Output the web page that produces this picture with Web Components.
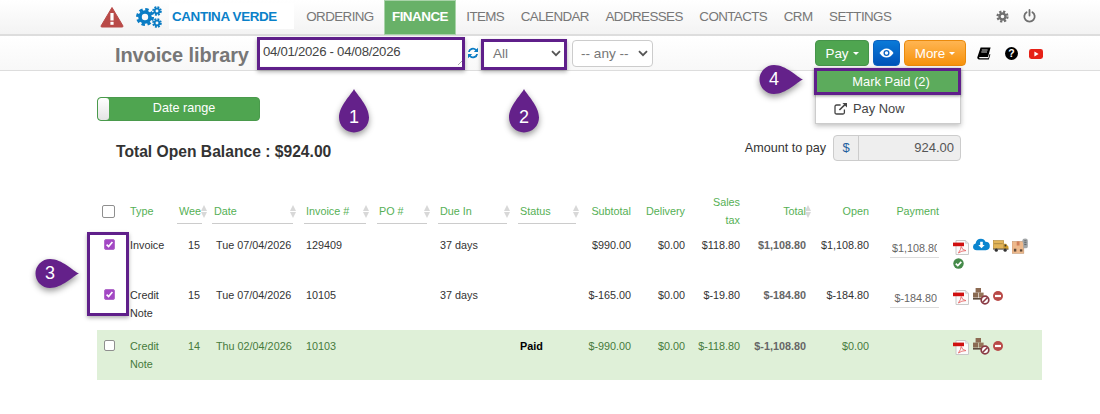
<!DOCTYPE html>
<html>
<head>
<meta charset="utf-8">
<style>
  html, body { margin: 0; padding: 0; background: #fff; font-family: "Liberation Sans", Arial, sans-serif; color: #333; overflow: hidden; }
  app-page { width: 1100px; height: 414px; }
</style>
</head>
<body>
<app-page>
  <top-nav slot="nav">
    <nav-link>ORDERING</nav-link>
    <nav-link active>FINANCE</nav-link>
    <nav-link>ITEMS</nav-link>
    <nav-link>CALENDAR</nav-link>
    <nav-link>ADDRESSES</nav-link>
    <nav-link>CONTACTS</nav-link>
    <nav-link>CRM</nav-link>
    <nav-link>SETTINGS</nav-link>
  </top-nav>
  <tool-bar slot="bar"></tool-bar>
  <balance-panel></balance-panel>
  <invoice-table>
    <invoice-row cells='["Invoice","15","Tue 07/04/2026","129409","","37 days","","$990.00","$0.00","$118.80","$1,108.80","$1,108.80"]' pay="$1,108.80" checked icons="pdf cloud truck box check"></invoice-row>
    <invoice-row tall cells='["Credit Note","15","Tue 07/04/2026","10105","","37 days","","$-165.00","$0.00","$-19.80","$-184.80","$-184.80"]' pay="$-184.80" checked icons="pdf pallet minus"></invoice-row>
    <invoice-row paid cells='["Credit Note","14","Thu 02/04/2026","10103","","","Paid","$-990.00","$0.00","$-118.80","$-1,108.80","$0.00"]' icons="pdf pallet minus"></invoice-row>
  </invoice-table>

  <mark-box style="left:257px;top:37px;width:208px;height:33px"></mark-box>
  <mark-box style="left:481px;top:39px;width:86px;height:31px"></mark-box>
  <mark-box style="left:87px;top:232px;width:42px;height:84px"></mark-box>
  <pin-note n="1" dir="up" style="left:339px;top:89px"></pin-note>
  <pin-note n="2" dir="up" style="left:509px;top:89px"></pin-note>
  <pin-note n="3" dir="right" style="left:35px;top:259px"></pin-note>
  <pin-note n="4" dir="right" style="left:759px;top:65px"></pin-note>
</app-page>

<script>
const icons = {
  warning: `<svg width="24" height="22" viewBox="0 0 24 22"><path d="M12 1.5 L23 20 Q23.3 21 22 21 H2 Q.7 21 1 20 Z" fill="#b94a48" stroke="#b94a48" stroke-linejoin="round"/><rect x="10.4" y="7" width="3.2" height="7.5" fill="#fff"/><rect x="10.4" y="15.8" width="3.2" height="3" fill="#fff"/></svg>`,
  gears: `<svg width="26" height="22" viewBox="0 0 26 22" fill="none" stroke="#0a7cc4">
    <circle cx="9" cy="11" r="5" stroke-width="3.6"/><circle cx="9" cy="11" r="7.6" stroke-width="2.8" stroke-dasharray="3.4 2.57"/>
    <circle cx="21" cy="5" r="2.4" stroke-width="1.9"/><circle cx="21" cy="5" r="3.9" stroke-width="1.8" stroke-dasharray="1.9 1.16"/>
    <circle cx="21" cy="17" r="2.4" stroke-width="1.9"/><circle cx="21" cy="17" r="3.9" stroke-width="1.8" stroke-dasharray="1.9 1.16"/></svg>`,
  cog: `<svg width="13" height="13" viewBox="0 0 13 13" fill="none" stroke="#6f6f6f"><circle cx="6.5" cy="6.5" r="3" stroke-width="2.4"/><circle cx="6.5" cy="6.5" r="5" stroke-width="2.2" stroke-dasharray="2.2 1.73"/></svg>`,
  power: `<svg width="13" height="14" viewBox="0 0 13 14" fill="none" stroke="#6f6f6f" stroke-width="1.8" stroke-linecap="round"><path d="M3.6 3.2 A5.2 5.2 0 1 0 9.4 3.2"/><path d="M6.5 1 V6.5"/></svg>`,
  refresh: `<svg width="12" height="12" viewBox="0 0 12 12" fill="#0a7cc4"><path d="M1 5 A5 5 0 0 1 9.5 2.2 L11 .8 V5 H6.8 L8.3 3.5 A3.3 3.3 0 0 0 2.8 5 Z"/><path d="M11 7 A5 5 0 0 1 2.5 9.8 L1 11.2 V7 H5.2 L3.7 8.5 A3.3 3.3 0 0 0 9.2 7 Z"/></svg>`,
  chevron: `<svg width="10" height="7" viewBox="0 0 10 7" fill="none" stroke="#555" stroke-width="1.8"><path d="M1 1.2 L5 5.2 L9 1.2"/></svg>`,
  eye: `<svg width="15" height="10" viewBox="0 0 15 10"><path d="M.5 5 Q3.5 .4 7.5 .4 T14.5 5 Q11.5 9.6 7.5 9.6 T.5 5Z" fill="#fff"/><circle cx="7.5" cy="5" r="3" fill="#0a63c4"/><circle cx="7.5" cy="5" r="1.7" fill="#fff"/></svg>`,
  book: `<svg width="14" height="13" viewBox="0 0 14 13"><path d="M3.6 .4 H13.6 L11 10 H2.6 Q1.6 10.6 2.6 11.2 H11.4 L12.6 7 L13.4 7.4 L11.8 12.6 H1.8 Q-.2 12 .4 10 Z" fill="#000"/><path d="M4.800 3 H10.600 M4.300 5 H10" stroke="#fff" stroke-width=".8"/></svg>`,
  youtube: `<svg width="14" height="10" viewBox="0 0 14 10"><rect width="14" height="10" rx="2.4" fill="#e62117"/><path d="M5.4 2.6 L9.6 5 L5.4 7.4Z" fill="#fff"/></svg>`,
  external: `<svg width="14" height="13" viewBox="0 0 14 13" fill="none" stroke="#444" stroke-width="1.3"><path d="M10.4 7.6 V10.5 Q10.4 12 9 12 H2.6 Q1 12 1 10.5 V4.6 Q1 3 2.6 3 H6.6"/><path d="M5.4 8 L12 1.6" stroke-width="1.6"/><path d="M8.4 .9 H13 V5.5 Z" fill="#444" stroke="none"/></svg>`,
  pdf: `<svg style="margin-right:1px" width="16" height="15" viewBox="0 0 16 15"><path d="M3 .5 H12.400 L15.500 3.200 V14.500 H3 Z" fill="#fbfbfb" stroke="#c9c9c9"/><path d="M12.400 .5 V3.200 H15.500" fill="#e4e4e4" stroke="#c9c9c9" stroke-width=".6"/><rect x="0" y="2.600" width="11" height="3.600" fill="#d01010"/><path d="M5.400 13 Q8 9.500 8.200 6.400 Q9 10.400 13 10.600 Q8.600 10.600 5.400 13Z" fill="none" stroke="#e86a6a" stroke-width=".9"/></svg>`,
  cloud: `<svg style="margin-top:-2px" width="17" height="13" viewBox="0 0 18 13"><path d="M4 12.600 Q0 12.400 0 8.800 Q0 6 2.800 5.400 Q3.400 .4 8.400 .4 Q12 .4 13.200 3.600 Q17.800 3.600 17.800 8.200 Q17.800 12.400 13.600 12.600 Z" fill="#0a85cf"/><path d="M7.600 3.600 H10.400 V7 H12.400 L9 10.600 L5.600 7 H7.600 Z" fill="#fff"/></svg>`,
  truck: `<svg width="16" height="12" viewBox="0 0 17 13"><rect x="0" y=".6" width="11.400" height="9" fill="#e2b457" stroke="#a87c28" stroke-width=".6"/><path d="M1 4 H10.400" stroke="#9a7c3a" stroke-width=".8"/><path d="M11.400 4 H14 L16.600 7.400 V10 H11.400 Z" fill="#d09c2c"/><rect x="12.400" y="5" width="1.800" height="2" fill="#333"/><rect x="0" y="9.400" width="16.600" height="1" fill="#555"/><circle cx="3.400" cy="11" r="1.700" fill="#333"/><circle cx="13" cy="11" r="1.700" fill="#333"/></svg>`,
  box: `<svg style="margin-top:-2px" width="16" height="16" viewBox="0 0 17 17"><rect x="0" y="3.600" width="12.600" height="12.800" fill="#eeb98c" stroke="#b58a66" stroke-width=".5"/><path d="M5 3.600 H8 V8 H5 Z" fill="#d0805a"/><rect x="2" y="11.400" width="2.600" height="3" fill="#5d4a3a"/><rect x="8.400" y="12" width="2.600" height="2.400" fill="#5d4a3a"/><path d="M11 3 Q11 .4 14 .4 Q16.800 .4 16.800 3 V9 Q16.800 11 14.600 11 H12 V7 Z" fill="#a2a6a8"/><path d="M13 3 H15.400 M13 5 H15.400 M13 7 H15.400" stroke="#5d6265"/></svg>`,
  check: `<svg width="11" height="11" viewBox="0 0 11 11"><circle cx="5.500" cy="5.500" r="5.200" fill="#458a4a"/><path d="M2.800 5.600 L4.800 7.600 L8.300 3.800" fill="none" stroke="#fff" stroke-width="1.700"/></svg>`,
  pallet: `<svg style="margin:-2px 0 0 0" width="17" height="17" viewBox="0 0 17 17"><rect x="2.600" y="0" width="5.400" height="4.600" fill="#8c6a52"/><rect x="0" y="4.600" width="5" height="5" fill="#8a6a52"/><rect x="5.600" y="4.600" width="5" height="5" fill="#97755a"/><rect x="0" y="10" width="10.800" height="1.600" fill="#5c4a3c"/><circle cx="12" cy="12" r="3.800" fill="#fff" stroke="#8a3a44" stroke-width="1.700"/><path d="M9.500 14.500 L14.500 9.500" stroke="#8a3a44" stroke-width="1.600"/></svg>`,
  minus: `<svg style="margin-top:1px" width="10" height="10" viewBox="0 0 10 10"><circle cx="5" cy="5" r="5" fill="#b94a48"/><rect x="2" y="3.900" width="6" height="2.200" fill="#fff"/></svg>`
};

function define(name, css, html) {
  customElements.define(name, class extends HTMLElement {
    constructor() {
      super();
      this.shadow = this.attachShadow({ mode: "open" });
    }
    attr(n) { return this.getAttribute(n); }
    connectedCallback() {
      const body = typeof html === "function" ? html(this) : html;
      this.shadow.innerHTML = `<style>${css}</style>${body}`;
    }
  });
}

define("app-page", `
  :host { display: block; position: relative; }
  .main { padding: 0 0 0 97px; }
`, `
  <slot name="nav"></slot>
  <slot name="bar"></slot>
  <div class="main"><slot></slot></div>
`);

define("top-nav", `
  :host { display: flex; align-items: stretch; height: 34px; background: linear-gradient(#fff, #f3f3f3); border-bottom: 2px solid #ddd; box-sizing: content-box; }
  .logo { display: flex; align-items: center; margin-left: 100px; width: 36px; }
  .gears { display: flex; align-items: center; width: 33px; }
  .brand { display: flex; align-items: center; align-self: flex-start; margin: 3px 0 0 0; height: 26px; width: 125px; padding-left: 3px; box-sizing: border-box; background: #fff; color: #0a81c9; font: bold 13.4px "Liberation Sans", sans-serif; letter-spacing: -.36px; }
  .links { display: flex; margin-left: 4px; }
  .right { display: flex; align-items: center; gap: 14px; margin-left: 96px; padding-bottom: 2px; }
`, `
  <div class="logo">${icons.warning}</div>
  <div class="gears">${icons.gears}</div>
  <div class="brand">CANTINA VERDE</div>
  <div class="links"><slot></slot></div>
  <div class="right">${icons.cog}${icons.power}</div>
`);

define("nav-link", `
  :host { display: flex; align-items: center; padding: 0 8.3px 2px; height: 35px; box-sizing: border-box; color: #777; font-size: 13.4px; letter-spacing: -.6px; white-space: nowrap; }
  :host([active]) { background: #68b168; color: #fff; font-weight: bold; box-shadow: inset 0 0 0 1px #a9d3a9; margin: 0 2px; padding: 0 8px 2px; letter-spacing: -.5px; }
`, `<slot></slot>`);

define("tool-bar", `
  :host { display: flex; align-items: flex-start; height: 34px; background: linear-gradient(#fff, #f8f8f8); border-bottom: 1px solid #ddd; position: relative; }
  h1 { margin: 5px 0 0 115px; width: 145px; color: #777; font: bold 20px/28px "Liberation Sans", sans-serif; letter-spacing: -.12px; white-space: nowrap; }
  .date { margin-top: 4px; width: 203px; height: 26px; box-sizing: border-box; background: #fff; padding: 3px 3px 0 3px; color: #444; font-size: 13.2px; line-height: 18px; letter-spacing: -.28px; position: relative; }
  .date::after { content: ""; position: absolute; right: 1px; bottom: 1px; width: 6px; height: 6px; background: linear-gradient(135deg, transparent 60%, #aaa 60%, #aaa 70%, transparent 70%); }
  .refresh { margin: 11px 0 0 4px; width: 15px; line-height: 0; }
  .sel { margin-top: 4px; height: 27px; box-sizing: border-box; background: #fff; border-radius: 4px; display: flex; align-items: center; justify-content: space-between; color: #777; font-size: 13.6px; padding: 0 4px 0 8px; }
  .sel.all { width: 80px; margin-left: 3px; }
  .sel.any { width: 81px; margin-left: 7px; border: 1px solid #ccc; }
  .btns { display: flex; margin-left: 162px; margin-top: 4px; gap: 4px; align-items: flex-start; }
  .icons { display: flex; margin: 11px 0 0 11px; align-items: center; }
  .q { width: 13px; height: 13px; margin: 0 11px 0 14px; border-radius: 50%; background: #000; color: #fff; font: bold 10.5px/13px "Liberation Sans", sans-serif; text-align: center; }
`, `
  <h1>Invoice library</h1>
  <div class="date">04/01/2026 - 04/08/2026</div>
  <div class="refresh">${icons.refresh}</div>
  <div class="sel all"><span>All</span>${icons.chevron}</div>
  <div class="sel any"><span>-- any --</span>${icons.chevron}</div>
  <div class="btns">
    <action-menu></action-menu>
    <tool-button tone="blue" w="27">${icons.eye}</tool-button>
    <tool-button tone="orange" w="62" caret>More</tool-button>
  </div>
  <div class="icons">${icons.book}<div class="q">?</div>${icons.youtube}</div>
`);

define("tool-button", `
  :host { display: flex; align-items: center; justify-content: center; gap: 4px; height: 26px; box-sizing: border-box; border-radius: 4px; color: #fff; font-size: 13.4px; border: 1px solid transparent; }
  :host([tone=green]) { background: #4fa550; border-color: #46944a; }
  :host([tone=blue]) { background: linear-gradient(#0a7ad8, #0052b8); border-color: #0a62c0; }
  :host([tone=orange]) { background: linear-gradient(#ffb552, #f7920c); border-color: #ea8a0c; }
  .caret { border: 3.5px solid transparent; border-top-color: #fff; border-bottom: 0; }
`, host => {
  host.style.width = host.attr("w") + "px";
  return `<slot></slot>${host.hasAttribute("caret") ? '<span class="caret"></span>' : ""}`;
});

define("action-menu", `
  :host { display: block; position: relative; width: 54px; }
  .menu { position: absolute; left: 0; top: 28px; width: 146px; height: 56px; box-sizing: border-box; background: #fff; border: 1px solid #ccc; box-shadow: 0 2px 5px rgba(0,0,0,.25); z-index: 3; font-size: 12.9px; white-space: nowrap; }
  .paid { height: 27px; margin: -1px -1px 0 -2px; padding-left: 7px; box-sizing: border-box; border: 3px solid #5f1f8a; background: #5cab5c; color: #fff; text-align: center; line-height: 21px; box-shadow: 0 1px 3px rgba(0,0,0,.4); }
  .now { display: flex; align-items: center; gap: 5px; padding: 6px 0 0 18px; color: #444; }
`, `
  <tool-button tone="green" w="54" caret>Pay</tool-button>
  <div class="menu">
    <div class="paid">Mark Paid (2)</div>
    <div class="now">${icons.external}<span>Pay Now</span></div>
  </div>
`);

define("balance-panel", `
  :host { display: block; padding-top: 26px; width: 864px; }
  .toggle { width: 163px; height: 24px; box-sizing: border-box; display: flex; border: 1px solid #4a9a4c; border-radius: 4px; background: #4fa550; color: #fff; font-size: 12.6px; overflow: hidden; }
  .knob { width: 11px; background: linear-gradient(#fff, #e4e4e4); border-radius: 3px; }
  .lbl { flex: 1; text-align: center; line-height: 20px; }
  .row { display: flex; justify-content: space-between; margin-top: 14px; height: 26px; }
  .total { margin: 8px 0 0 19px; font: bold 15.65px/18px "Liberation Sans", sans-serif; color: #333; }
  .amount { display: flex; align-items: center; gap: 7px; font-size: 12.6px; color: #333; }
  .group { display: flex; width: 128px; height: 26px; box-sizing: border-box; border: 1px solid #ccc; border-radius: 4px; background: #eee; color: #555; font-size: 13px; line-height: 24px; }
  .dollar { width: 25px; text-align: center; border-right: 1px solid #ccc; color: #1f5f9f; box-sizing: border-box; }
  .val { flex: 1; text-align: right; padding-right: 6px; }
`, `
  <div class="toggle"><div class="knob"></div><div class="lbl">Date range</div></div>
  <div class="row">
    <div class="total">Total Open Balance : $924.00</div>
    <div class="amount"><span>Amount to pay</span>
      <div class="group"><div class="dollar">$</div><div class="val">924.00</div></div>
    </div>
  </div>
`);

const cols = "33px 47px 35px 92px 73px 61px 80px 69px 44px 54px 55px 66px 63px 70px 103px";

define("invoice-table", `
  :host { display: block; width: 945px; margin-top: 32px; font-size: 10.8px; line-height: 18px; }
  .head { display: grid; grid-template-columns: ${cols}; height: 36px; align-items: center; color: #55b055; }
  .r { text-align: right; }
  .cb { padding: 0 0 0 5px; line-height: 0; }
  .s { display: flex; justify-content: space-between; align-items: center; height: 24px; box-sizing: border-box; border-bottom: 1px solid #ccc; margin-top: 1px; position: relative; padding-left: 2px; }
  .arrows { display: flex; flex-direction: column; gap: 1px; flex: none; width: 7px; margin-right: -4px; }
  .arrows i { display: block; width: 0; border: 3.5px solid transparent; border-bottom: 6px solid #d8d8d8; border-top: 0; }
  .arrows i + i { border-top: 6px solid #d8d8d8; border-bottom: 0; }
  .total { display: flex; justify-content: flex-end; align-items: center; }
  .total .arrows { margin: 0 -6px 0 -1px; }
`, () => {
  const arrows = `<span class="arrows"><i></i><i></i></span>`;
  const sorted = (label, right) => `<div class="s" style="margin-right:${right}px"><span>${label}</span>${arrows}</div>`;
  return `
  <div class="head">
    <div class="cb"><check-box size="13"></check-box></div>
    <div>Type</div>
    ${sorted("Wee", 10)}
    ${sorted("Date", 11)}
    ${sorted("Invoice #", 11)}
    ${sorted("PO #", 11)}
    ${sorted("Due In", 11)}
    ${sorted("Status", 11)}
    <div class="r">Subtotal</div>
    <div class="r">Delivery</div>
    <div class="r">Sales<br>tax</div>
    <div class="total">Total${arrows}</div>
    <div class="r">Open</div>
    <div class="r">Payment</div>
    <div></div>
  </div>
  <slot></slot>`;
});

define("check-box", `
  :host { display: inline-block; box-sizing: border-box; border: 1px solid #8f8f8f; border-radius: 2px; background: #fff; line-height: 0; }
  :host([checked]) { background: #a347c4; border-color: #b26ccb; }
  svg { display: block; width: 100%; height: 100%; }
`, host => {
  const s = (host.attr("size") || 11) + "px";
  host.style.width = s; host.style.height = s;
  return host.hasAttribute("checked") ? `<svg viewBox="0 0 9 9"><path d="M1.600 4.600 L3.600 6.600 L7.400 2" fill="none" stroke="#fff" stroke-width="1.600"/></svg>` : "";
});

define("invoice-row", `
  :host { display: grid; grid-template-columns: ${cols}; height: 50px; padding-top: 7px; box-sizing: border-box; color: #333; }
  :host([tall]) { height: 51px; }
  :host([paid]) { background: #dff0d8; color: #467a3c; }
  .cb { padding: 3px 0 0 7px; line-height: 0; }
  .n { text-align: right; padding-right: 12px; }
  .indent { padding-left: 4px; }
  .pl2 { padding-left: 2px; }
  .r { text-align: right; }
  .strong { text-align: right; font-weight: bold; color: #666; }
  .status { font-weight: bold; color: #000; padding-left: 2px; }
  .pay { display: flex; justify-content: flex-end; }
  input { width: 49px; height: 20px; box-sizing: border-box; margin: 2px 0 0; border: 0; border-bottom: 1px solid #ddd; outline: 0; background: transparent; color: #666; font: 10.8px/19px "Liberation Sans", sans-serif; padding: 0 2px; text-align: right; }
  .icons { display: flex; flex-wrap: wrap; column-gap: 3px; row-gap: 3px; align-items: flex-start; align-content: flex-start; padding: 4px 0 0 14px; width: 89px; box-sizing: border-box; line-height: 0; }
  :host([paid]) .icons { padding-top: 3px; }
  .icons svg { display: block; }
`, host => {
  const c = JSON.parse(host.attr("cells"));
  const classes = ["", "n", "indent", "pl2", "", "pl2", "status", "r", "r", "r", "strong", "r"];
  const cells = c.map((t, i) => `<div class="${classes[i]}">${t}</div>`).join("");
  const pay = host.attr("pay");
  const iconList = host.attr("icons").split(" ").map(n => icons[n]).join("");
  return `
    <div class="cb"><check-box ${host.hasAttribute("checked") ? "checked" : ""}></check-box></div>
    ${cells}
    <div class="pay">${pay ? `<input readonly value="${pay}">` : ""}</div>
    <div class="icons">${iconList}</div>`;
});

define("mark-box", `
  :host { position: absolute; box-sizing: border-box; border: 3px solid #5f1f8a; box-shadow: 0 2px 4px rgba(0,0,0,.3); z-index: 2; pointer-events: none; }
`, ``);

define("pin-note", `
  :host { position: absolute; z-index: 4; display: grid; color: #fff; font: 18px "Liberation Sans", sans-serif; }
  svg { display: block; overflow: visible; filter: drop-shadow(0 3px 3px rgba(0,0,0,.4)); grid-area: 1/1; }
  span { grid-area: 1/1; text-align: center; position: relative; }
  :host([dir=up]) span { padding-top: 18px; line-height: 20px; }
  :host([dir=right]) span { padding-right: 14px; line-height: 29px; }
`, host => host.attr("dir") === "up"
  ? `<svg width="30" height="44" viewBox="0 0 30 44"><path d="M15 0 C18 6 30 17 30 28.500 A15 15 0 0 1 0 28.500 C0 17 12 6 15 0Z" fill="#64218a"/></svg><span>${host.attr("n")}</span>`
  : `<svg width="44" height="29" viewBox="0 0 44 29"><path d="M44 14.500 C38 17 27 29 15 29 A14.500 14.500 0 0 1 15 0 C27 0 38 12 44 14.500Z" fill="#64218a"/></svg><span>${host.attr("n")}</span>`);
</script>
</body>
</html>
